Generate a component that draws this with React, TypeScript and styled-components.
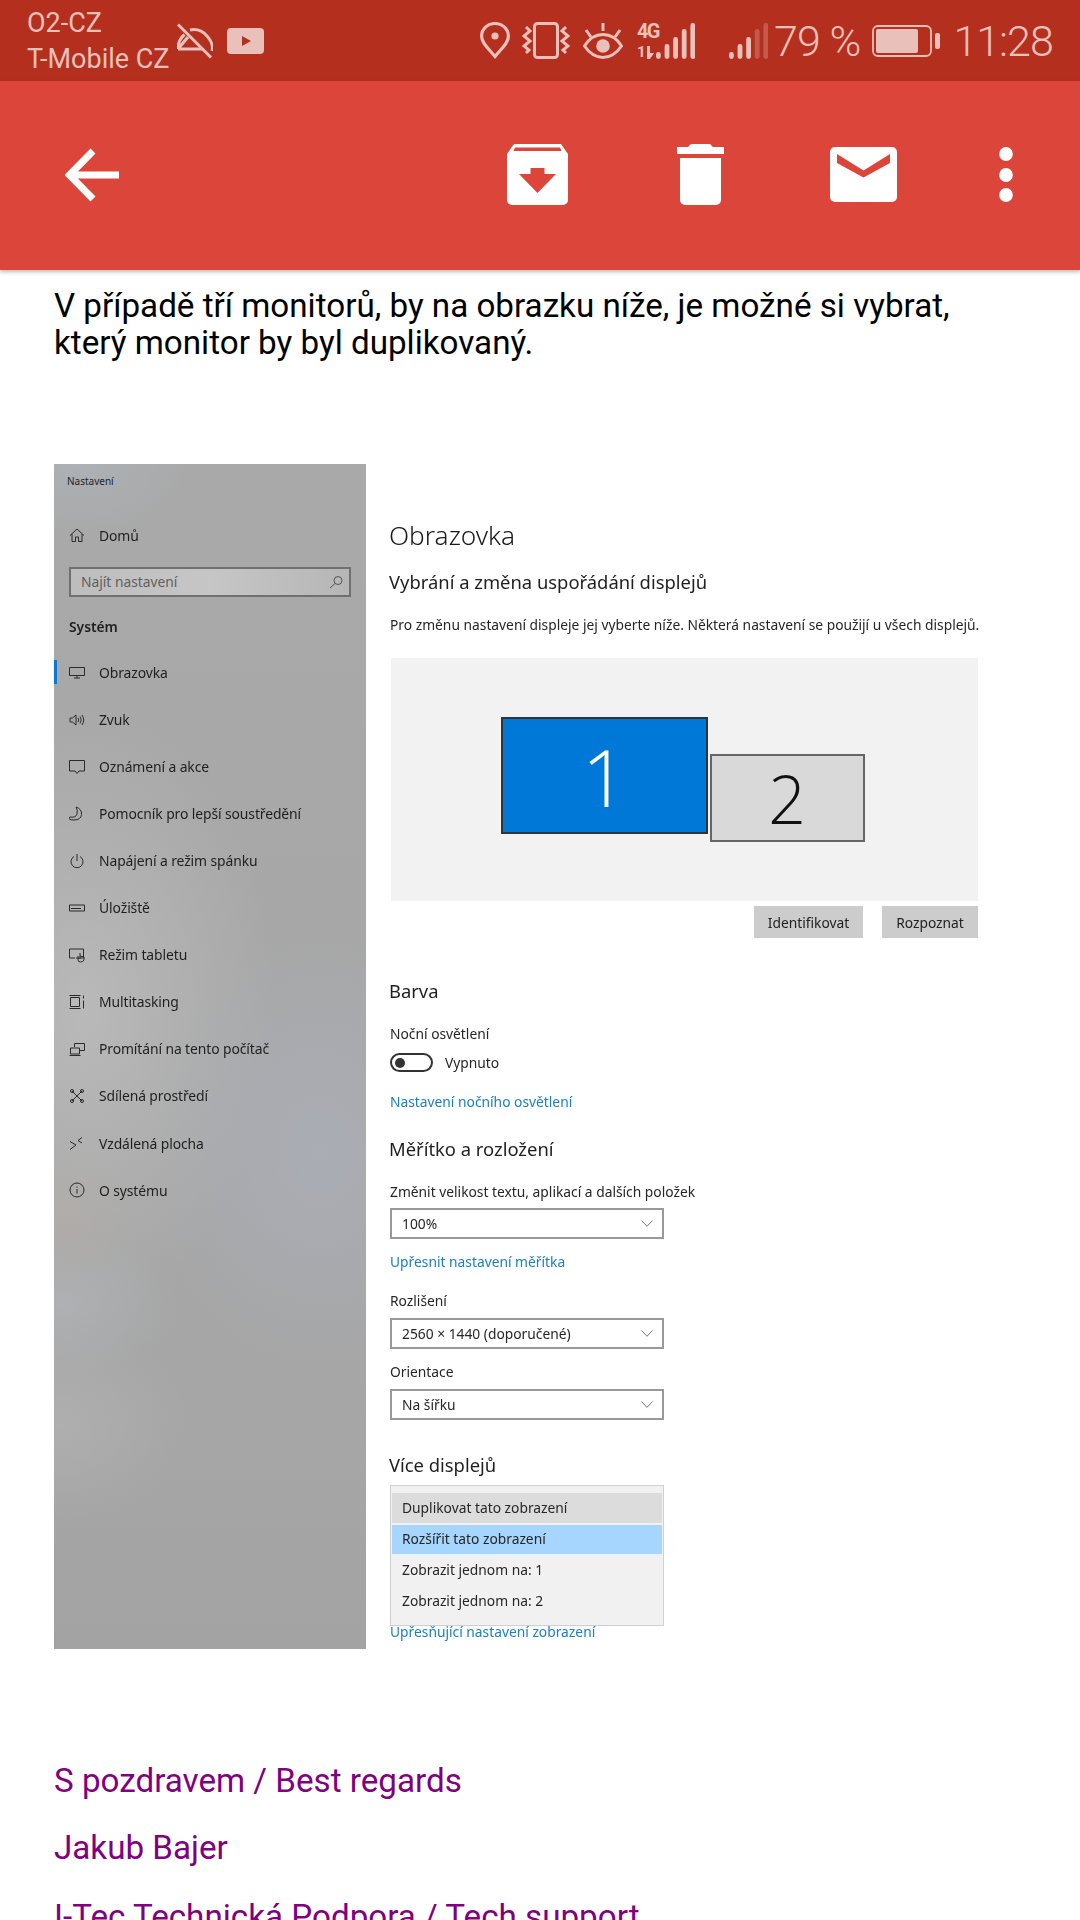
import React from "react";
import styled, { createGlobalStyle } from "styled-components";

const Global = createGlobalStyle`
  html, body { margin: 0; padding: 0; background: #fff; }
  body { font-family: Roboto, "Noto Sans", sans-serif; }
  #root { width: 1080px; height: 1920px; overflow: hidden; }
`;

const Page = styled.div`
  width: 1080px;
  height: 1920px;
  overflow: hidden;
  background: #fff;
  display: flex;
  flex-direction: column;
`;

const StatusBar = styled.header`
  height: 81px;
  flex: none;
  background: #b52f1f;
  color: #e9c0ba;
  display: flex;
  align-items: center;
  box-sizing: border-box;
  padding: 0 0 0 27px;
`;

const Carriers = styled.div`
  font-size: 27px;
  line-height: 36px;
  width: 150px;
  flex: none;
  white-space: nowrap;
  margin-top: 1px;
`;

const StatusIcon = styled.svg<{ $left?: number }>`
  display: block;
  flex: none;
  margin-left: ${(p) => p.$left ?? 0}px;
  color: #e9c0ba;
`;

const StatusText = styled.span<{ $left?: number; $size: number }>`
  font-size: ${(p) => p.$size}px;
  font-weight: 300;
  line-height: 40px;
  margin-left: ${(p) => p.$left ?? 0}px;
  white-space: nowrap;
  flex: none;
`;

const Percent = styled(StatusText)`
  letter-spacing: -0.9px;
`;

const Clock = styled(StatusText)`
  letter-spacing: -1px;
`;

const NetworkGroup = styled.div`
  margin-left: 14px;
  width: 58px;
  height: 36px;
  flex: none;
  display: flex;
  justify-content: space-between;
`;

const NetworkLabel = styled.div`
  width: 19px;
  height: 36px;
  display: flex;
  flex-direction: column;
  justify-content: space-between;
  font-weight: 700;
  white-space: nowrap;
`;

const NetworkType = styled.span`
  font-size: 20px;
  line-height: 16px;
  letter-spacing: -1.6px;
`;

const ActivityRow = styled.span`
  display: flex;
  align-items: flex-end;
  gap: 1px;
  font-size: 15px;
  line-height: 13px;
  letter-spacing: -1px;
`;

const Toolbar = styled.div`
  height: 189px;
  flex: none;
  background: #dc4539;
  box-shadow: 0 2px 4px rgba(0, 0, 0, 0.28);
  display: flex;
  align-items: center;
  box-sizing: border-box;
  padding: 0 67px 2px 65px;
  position: relative;
  z-index: 1;
`;

const ToolIcon = styled.svg<{ $left?: number; $auto?: boolean }>`
  display: block;
  flex: none;
  margin-left: ${(p) => (p.$auto ? "auto" : `${p.$left ?? 0}px`)};
`;

const Body = styled.main`
  padding-left: 54px;
  display: flex;
  flex-direction: column;
  flex: 1;
  min-height: 0;
`;

const Lead = styled.p`
  margin: 16.5px 0 0;
  width: 960px;
  font-size: 33.2px;
  line-height: 37px;
  color: #000;
`;

const Shot = styled.section`
  margin-top: 103.5px;
  display: flex;
  height: 1185px;
  flex: none;
  font-family: "Noto Sans", Roboto, sans-serif;
  color: #222;
  filter: blur(0.35px);
`;

const Sidebar = styled.aside`
  width: 312px;
  flex: none;
  height: 1185px;
  box-sizing: border-box;
  padding: 9px 15px 0;
  color: #1f1f1f;
  background:
    radial-gradient(ellipse 110px 70px at 8% 0%, rgba(176, 186, 194, 0.5), transparent),
    radial-gradient(ellipse 80px 70px at 0% 64%, rgba(186, 172, 166, 0.35), transparent),
    radial-gradient(ellipse 120px 70px at 2% 71%, rgba(182, 186, 192, 0.5), transparent),
    radial-gradient(ellipse 130px 100px at 2% 81%, rgba(182, 182, 182, 0.55), transparent),
    radial-gradient(ellipse 170px 220px at 85% 58%, rgba(172, 175, 186, 0.75), transparent),
    radial-gradient(ellipse 190px 300px at 10% 46%, rgba(190, 191, 190, 0.75), transparent),
    linear-gradient(180deg, #a9a9a9 0%, #a7a7a7 50%, #a6a6a6 80%, #a3a3a3 100%);
`;

const AppLabel = styled.div`
  font-size: 10px;
  line-height: 16px;
  margin-left: -2px;
`;

const NavRow = styled.div<{ $active?: boolean; $top?: number }>`
  height: 47.05px;
  margin-top: ${(p) => p.$top ?? 0}px;
  display: flex;
  align-items: center;
  font-size: 13.9px;
  letter-spacing: -0.1px;
  position: relative;
  white-space: nowrap;

  &::before {
    content: "";
    display: ${(p) => (p.$active ? "block" : "none")};
    position: absolute;
    left: -15px;
    top: 11px;
    width: 3px;
    height: 24px;
    background: #0a78d7;
  }
`;

const NavIcon = styled.svg`
  width: 16px;
  height: 16px;
  flex: none;
  margin-right: 14px;
  fill: none;
  stroke: #2a2a2a;
  stroke-width: 1;
`;

const SearchBox = styled.div`
  height: 30px;
  box-sizing: border-box;
  margin-top: 8px;
  border: 2px solid #707070;
  background: linear-gradient(90deg, #bdbdbd, #c6c6c6 50%, #b6b6b6);
  display: flex;
  align-items: center;
  justify-content: space-between;
  padding: 0 6px 0 10px;
  font-size: 13.8px;
  color: #5f5f5f;
`;

const SearchIcon = styled.svg`
  width: 14px;
  height: 14px;
  fill: none;
  stroke: #555;
  stroke-width: 1;
`;

const GroupLabel = styled.div`
  margin-top: 20px;
  font-size: 13.8px;
  font-weight: 600;
  line-height: 20px;
`;

const Pane = styled.div`
  padding-left: 23px;
  width: 590px;
  display: flex;
  flex-direction: column;
  align-items: flex-start;
  flex: none;
`;

const Title = styled.h1`
  margin: 55px 0 0;
  font-size: 26.2px;
  font-weight: 300;
  line-height: 32px;
  color: #1a1a1a;
`;

const Heading = styled.h2<{ $top: number }>`
  margin: ${(p) => p.$top}px 0 0;
  font-size: 18.4px;
  font-weight: 400;
  line-height: 24px;
  color: #1f1f1f;
  white-space: nowrap;
`;

const Line = styled.div<{ $top: number }>`
  margin: ${(p) => p.$top}px 0 0 1px;
  font-size: 13.8px;
  line-height: 20px;
  white-space: nowrap;
  color: #262626;
`;

const Link = styled(Line)`
  color: #1a80c2;
`;

const TightLink = styled(Link)`
  line-height: 12px;
`;

const DisplayCanvas = styled.div`
  position: relative;
  margin: 23px 0 0 1.5px;
  width: 587px;
  height: 243px;
  background: #f2f2f2;
  flex: none;
`;

const MonitorTile = styled.div<{
  $x: number;
  $y: number;
  $w: number;
  $h: number;
  $size: number;
  $on?: boolean;
}>`
  position: absolute;
  left: ${(p) => p.$x}px;
  top: ${(p) => p.$y}px;
  width: ${(p) => p.$w}px;
  height: ${(p) => p.$h}px;
  box-sizing: border-box;
  border: 2px solid ${(p) => (p.$on ? "#333" : "#666")};
  background: ${(p) => (p.$on ? "#0078d7" : "#d9d9d9")};
  color: ${(p) => (p.$on ? "#fff" : "#111")};
  display: flex;
  align-items: center;
  justify-content: center;
  font-family: "Open Sans", sans-serif;
  font-weight: 300;
  font-size: ${(p) => p.$size}px;
  line-height: 1;
`;

const ButtonRow = styled.div`
  margin: 5px 0 0;
  width: 589px;
  display: flex;
  justify-content: flex-end;
  gap: 19px;
  flex: none;
`;

const GrayButton = styled.div<{ $w: number }>`
  width: ${(p) => p.$w}px;
  height: 32px;
  background: #ccc;
  display: flex;
  align-items: center;
  justify-content: center;
  font-size: 13.8px;
  color: #222;
`;

const ToggleRow = styled.div`
  margin: 9px 0 0 1px;
  height: 19px;
  display: flex;
  align-items: center;
  font-size: 13.8px;
  color: #262626;
`;

const Toggle = styled.div`
  width: 43px;
  height: 19px;
  box-sizing: border-box;
  border: 2px solid #333;
  border-radius: 10px;
  margin-right: 12px;
  display: flex;
  align-items: center;
  padding-left: 3px;

  &::before {
    content: "";
    width: 10px;
    height: 10px;
    border-radius: 50%;
    background: #333;
  }
`;

const Select = styled.div<{ $top: number }>`
  margin: ${(p) => p.$top}px 0 0 1px;
  width: 274px;
  height: 31px;
  box-sizing: border-box;
  border: 2px solid #999;
  background: #fff;
  display: flex;
  align-items: center;
  justify-content: space-between;
  padding: 0 9px 0 10px;
  font-size: 13.8px;
  color: #262626;
  flex: none;
`;

const Chevron = styled.svg`
  width: 12px;
  height: 7px;
  fill: none;
  stroke: #777;
  stroke-width: 1;
`;

const Dropdown = styled.div`
  margin: 8px 0 0 1px;
  width: 274px;
  height: 141px;
  box-sizing: border-box;
  border: 1px solid #d0d0d0;
  background: #f1f1f1;
  padding: 7px 1px 0;
  flex: none;
`;

const Option = styled.div<{ $kind?: "hover" | "selected"; $h: number }>`
  height: ${(p) => p.$h}px;
  box-sizing: border-box;
  margin-bottom: ${(p) => (p.$kind === "hover" ? 2 : 0)}px;
  display: flex;
  align-items: center;
  padding: 0 0 2px 10px;
  font-size: 13.8px;
  color: #262626;
  background: ${(p) =>
    p.$kind === "hover" ? "#dcdcdc" : p.$kind === "selected" ? "#a6d5fd" : "transparent"};
`;

const Signature = styled.p<{ $top: number }>`
  margin: ${(p) => p.$top}px 0 0;
  font-size: 33.2px;
  line-height: 37px;
  color: #800080;
  white-space: nowrap;
`;

const nav: { label: string; icon: React.ReactNode; active?: boolean }[] = [
  { label: "Obrazovka", active: true, icon: <path d="M.5 2.5h15v8H.5zM8 10.5V13M5 13h6" /> },
  { label: "Zvuk", icon: <path d="M1 6h2.500L7 3v10L3.500 10H1zM9 6q1.500 2 0 4M11 4.500q2.500 3.500 0 7M13 3q3.500 5 0 10" /> },
  { label: "Oznámení a akce", icon: <path d="M.5 1.500h15v10.500H10L8 14.500 6 12H.5z" /> },
  { label: "Pomocník pro lepší soustředění", icon: <path d="M7 1q6 2 5.500 7.500T5 14 1 11q6 1 7-3T7 1z" /> },
  { label: "Napájení a režim spánku", icon: <path d="M8 1v7M5 3.500a6 6 0 1 0 6 0" /> },
  { label: "Úložiště", icon: <path d="M.5 5h15v6H.5zM2 8.500h10" /> },
  { label: "Režim tabletu", icon: <path d="M.5 2h14v9H7M.5 2v9H6M11 6v6M9 9v4q0 2 2.500 2t3.500-2v-3l-4-1" /> },
  { label: "Multitasking", icon: <path d="M.5 1.500h11M.5 14.500h11M1.500 3.500h9v9h-9zM14.500 1.500v3M14.500 6.500v8" /> },
  { label: "Promítání na tento počítač", icon: <path d="M5.500 6V2.500h10v7H11M1.500 7h9v6h-9zM.5 14.500h11" /> },
  { label: "Sdílená prostředí", icon: <path d="M3 3l10 10M13 3L3 13M4.500 3a1.500 1.500 0 1 1-3 0 1.500 1.500 0 0 1 3 0zM14.500 3a1.500 1.500 0 1 1-3 0 1.500 1.500 0 0 1 3 0zM4.500 13a1.500 1.500 0 1 1-3 0 1.500 1.500 0 0 1 3 0zM14.500 13a1.500 1.500 0 1 1-3 0 1.500 1.500 0 0 1 3 0z" /> },
  { label: "Vzdálená plocha", icon: <path d="M1 6.500l6 3.500-6 4.500M13 2.500L9 5.500l4 2.500" /> },
  { label: "O systému", icon: <path d="M15 8A7 7 0 1 1 1 8a7 7 0 0 1 14 0zM8 7v4.500M8 4.500v1.200" /> },
];

function DownChevron() {
  return (
    <Chevron viewBox="0 0 12 7">
      <path d="M.5.5L6 6.300 11.500.5" />
    </Chevron>
  );
}

function SignalBars({ dim }: { dim: number }) {
  const bars = [7, 15, 22, 30, 36];
  return (
    <>
      {bars.map((h, i) => (
        <rect
          key={i}
          x={i * 8.6}
          y={36 - h}
          width={4.8}
          height={h}
          rx={2.4}
          fill="currentColor"
          opacity={i >= dim ? 0.3 : 1}
        />
      ))}
    </>
  );
}

export default function App() {
  return (
    <Page>
      <Global />
      <StatusBar>
        <Carriers>
          <div>O2-CZ</div>
          <div>T-Mobile CZ</div>
        </Carriers>
        <StatusIcon width="36" height="36" viewBox="0 0 36 36" fill="none" stroke="currentColor" strokeWidth="3">
          <path d="M1 1.500L34 34.500" />
          <path d="M1 26h24M1 26q0-9 6.500-14.500M1 26L11 14M13 7q10-2 17 6t5 15" />
        </StatusIcon>
        <StatusIcon $left={14} width="37" height="26" viewBox="0 0 37 26">
          <path fill="currentColor" fillRule="evenodd" d="M4 0h29a4 4 0 0 1 4 4v18a4 4 0 0 1-4 4H4a4 4 0 0 1-4-4V4a4 4 0 0 1 4-4zM15 8v10l9-5z" />
        </StatusIcon>
        <StatusIcon $left={216} width="30" height="37" viewBox="0 0 30 37" fill="none" stroke="currentColor" strokeWidth="3.200">
          <path d="M15 34.500C8 26 1.600 21 1.600 14a13.400 12.500 0 0 1 26.800 0C28.400 21 22 26 15 34.500z" />
          <circle cx="15" cy="14" r="3.600" fill="currentColor" stroke="none" />
        </StatusIcon>
        <StatusIcon $left={12} width="48" height="37" viewBox="0 0 48 37" fill="none" stroke="currentColor" strokeWidth="3">
          <rect x="12.500" y="1.500" width="23" height="34" rx="3" />
          <path d="M4 5l4 4-6 5 6 5-6 5 5 4-3 3" />
          <path d="M44 5l-4 4 6 5-6 5 6 5-5 4 3 3" />
        </StatusIcon>
        <StatusIcon $left={13} width="40" height="36" viewBox="0 0 40 36" fill="none" stroke="currentColor" strokeWidth="3">
          <path d="M1.500 23C7 14 13 11.500 20 11.500S33 14 38.500 23C33 31 27 34.500 20 34.500S7 31 1.500 23z" />
          <circle cx="20" cy="23" r="6.800" fill="currentColor" stroke="none" />
          <path d="M20 0v8M3 7l5 7M37 7l-5 7" />
        </StatusIcon>
        <NetworkGroup>
          <NetworkLabel>
            <NetworkType>4G</NetworkType>
            <ActivityRow>
              1
              <svg width="9" height="13" viewBox="0 0 9 13">
                <path d="M1 13V0h3v7l4 0-4 6z" fill="currentColor" />
              </svg>
            </ActivityRow>
          </NetworkLabel>
          <StatusIcon width="39" height="36" viewBox="0 0 39 36">
            <SignalBars dim={9} />
          </StatusIcon>
        </NetworkGroup>
        <StatusIcon $left={34} width="39" height="36" viewBox="0 0 39 36">
          <SignalBars dim={3} />
        </StatusIcon>
        <Percent $left={6} $size={43}>
          79 %
        </Percent>
        <StatusIcon $left={12} width="68" height="32" viewBox="0 0 68 32" fill="none">
          <rect x="1" y="1" width="58" height="30" rx="5" stroke="currentColor" strokeWidth="1.800" />
          <rect x="4" y="4" width="42" height="24" rx="2" fill="currentColor" />
          <rect x="63" y="8" width="5" height="16" rx="2" fill="currentColor" />
        </StatusIcon>
        <Clock $left={13} $size={43}>
          11:28
        </Clock>
      </StatusBar>

      <Toolbar>
        <ToolIcon width="54" height="54" viewBox="0 0 54 54" fill="none" stroke="#fff" strokeWidth="7">
          <path d="M54 27H6M28 3L4.500 27 28 51" />
        </ToolIcon>
        <ToolIcon $auto width="61" height="61" viewBox="0 0 61 61">
          <path fill="#fff" fillRule="evenodd" d="M7 0h47l7 10v46a5 5 0 0 1-5 5H5a5 5 0 0 1-5-5V10zM8 3.500l-1.500 3.500h48L53 3.500zM23.500 24v6H12l18.500 19L49 30H37.500v-6z" />
        </ToolIcon>
        <ToolIcon $left={109} width="47" height="61" viewBox="0 0 47 61">
          <path fill="#fff" d="M14 0h19l3 3h11v7H0V3h11zM3 14h41v42a5 5 0 0 1-5 5H8a5 5 0 0 1-5-5z" />
        </ToolIcon>
        <ToolIcon $left={106} width="67" height="55" viewBox="0 0 67 55">
          <path fill="#fff" fillRule="evenodd" d="M5 0h57a5 5 0 0 1 5 5v45a5 5 0 0 1-5 5H5a5 5 0 0 1-5-5V5a5 5 0 0 1 5-5zM7 7v9l26.500 14.500L60 16V7L33.500 23.500z" />
        </ToolIcon>
        <ToolIcon $left={102} width="14" height="56" viewBox="0 0 14 56" fill="#fff">
          <ellipse cx="7" cy="7" rx="6.800" ry="7" />
          <ellipse cx="7" cy="28" rx="6.800" ry="7" />
          <ellipse cx="7" cy="48" rx="6.800" ry="7" />
        </ToolIcon>
      </Toolbar>

      <Body>
        <Lead>
          V případě tří monitorů, by na obrazku níže, je možné si vybrat,
          <br />
          který monitor by byl duplikovaný.
        </Lead>

        <Shot>
          <Sidebar>
            <AppLabel>Nastavení</AppLabel>
            <NavRow $top={22.5}>
              <NavIcon viewBox="0 0 16 16">
                <path d="M1 8.500L8 2l7 6.500M3 7v7.500h3.500V10h3v4.500H13V7" />
              </NavIcon>
              Domů
            </NavRow>
            <SearchBox>
              Najít nastavení
              <SearchIcon viewBox="0 0 14 14">
                <path d="M13 5.500a4 4 0 1 1-8 0 4 4 0 0 1 8 0zM6 8.500L1 13" />
              </SearchIcon>
            </SearchBox>
            <GroupLabel>Systém</GroupLabel>
            {nav.map((n, i) => (
              <NavRow key={n.label} $active={n.active} $top={i === 0 ? 12.5 : 0}>
                <NavIcon viewBox="0 0 16 16">{n.icon}</NavIcon>
                {n.label}
              </NavRow>
            ))}
          </Sidebar>

          <Pane>
            <Title>Obrazovka</Title>
            <Heading $top={19}>Vybrání a změna uspořádání displejů</Heading>
            <Line $top={21}>
              Pro změnu nastavení displeje jej vyberte níže. Některá nastavení se použijí u všech displejů.
            </Line>
            <DisplayCanvas>
              <MonitorTile $on $x={110.5} $y={59} $w={207} $h={117} $size={80}>
                1
              </MonitorTile>
              <MonitorTile $x={319} $y={96} $w={155} $h={88} $size={66}>
                2
              </MonitorTile>
            </DisplayCanvas>
            <ButtonRow>
              <GrayButton $w={109}>Identifikovat</GrayButton>
              <GrayButton $w={96}>Rozpoznat</GrayButton>
            </ButtonRow>

            <Heading $top={41}>Barva</Heading>
            <Line $top={21}>Noční osvětlení</Line>
            <ToggleRow>
              <Toggle />
              Vypnuto
            </ToggleRow>
            <Link $top={20}>Nastavení nočního osvětlení</Link>

            <Heading $top={25}>Měřítko a rozložení</Heading>
            <Line $top={21}>Změnit velikost textu, aplikací a dalších položek</Line>
            <Select $top={6}>
              100%
              <DownChevron />
            </Select>
            <Link $top={13}>Upřesnit nastavení měřítka</Link>
            <Line $top={19}>Rozlišení</Line>
            <Select $top={7}>
              2560 × 1440 (doporučené)
              <DownChevron />
            </Select>
            <Line $top={13}>Orientace</Line>
            <Select $top={7}>
              Na šířku
              <DownChevron />
            </Select>

            <Heading $top={33}>Více displejů</Heading>
            <Dropdown>
              <Option $kind="hover" $h={30}>Duplikovat tato zobrazení</Option>
              <Option $kind="selected" $h={29}>Rozšířit tato zobrazení</Option>
              <Option $h={32}>Zobrazit jednom na: 1</Option>
              <Option $h={31}>Zobrazit jednom na: 2</Option>
            </Dropdown>
            <TightLink $top={0}>Upřesňující nastavení zobrazení</TightLink>
          </Pane>
        </Shot>

        <Signature $top={112.5}>S pozdravem / Best regards</Signature>
        <Signature $top={30}>Jakub Bajer</Signature>
        <Signature $top={32}>I-Tec Technická Podpora / Tech support</Signature>
      </Body>
    </Page>
  );
}
